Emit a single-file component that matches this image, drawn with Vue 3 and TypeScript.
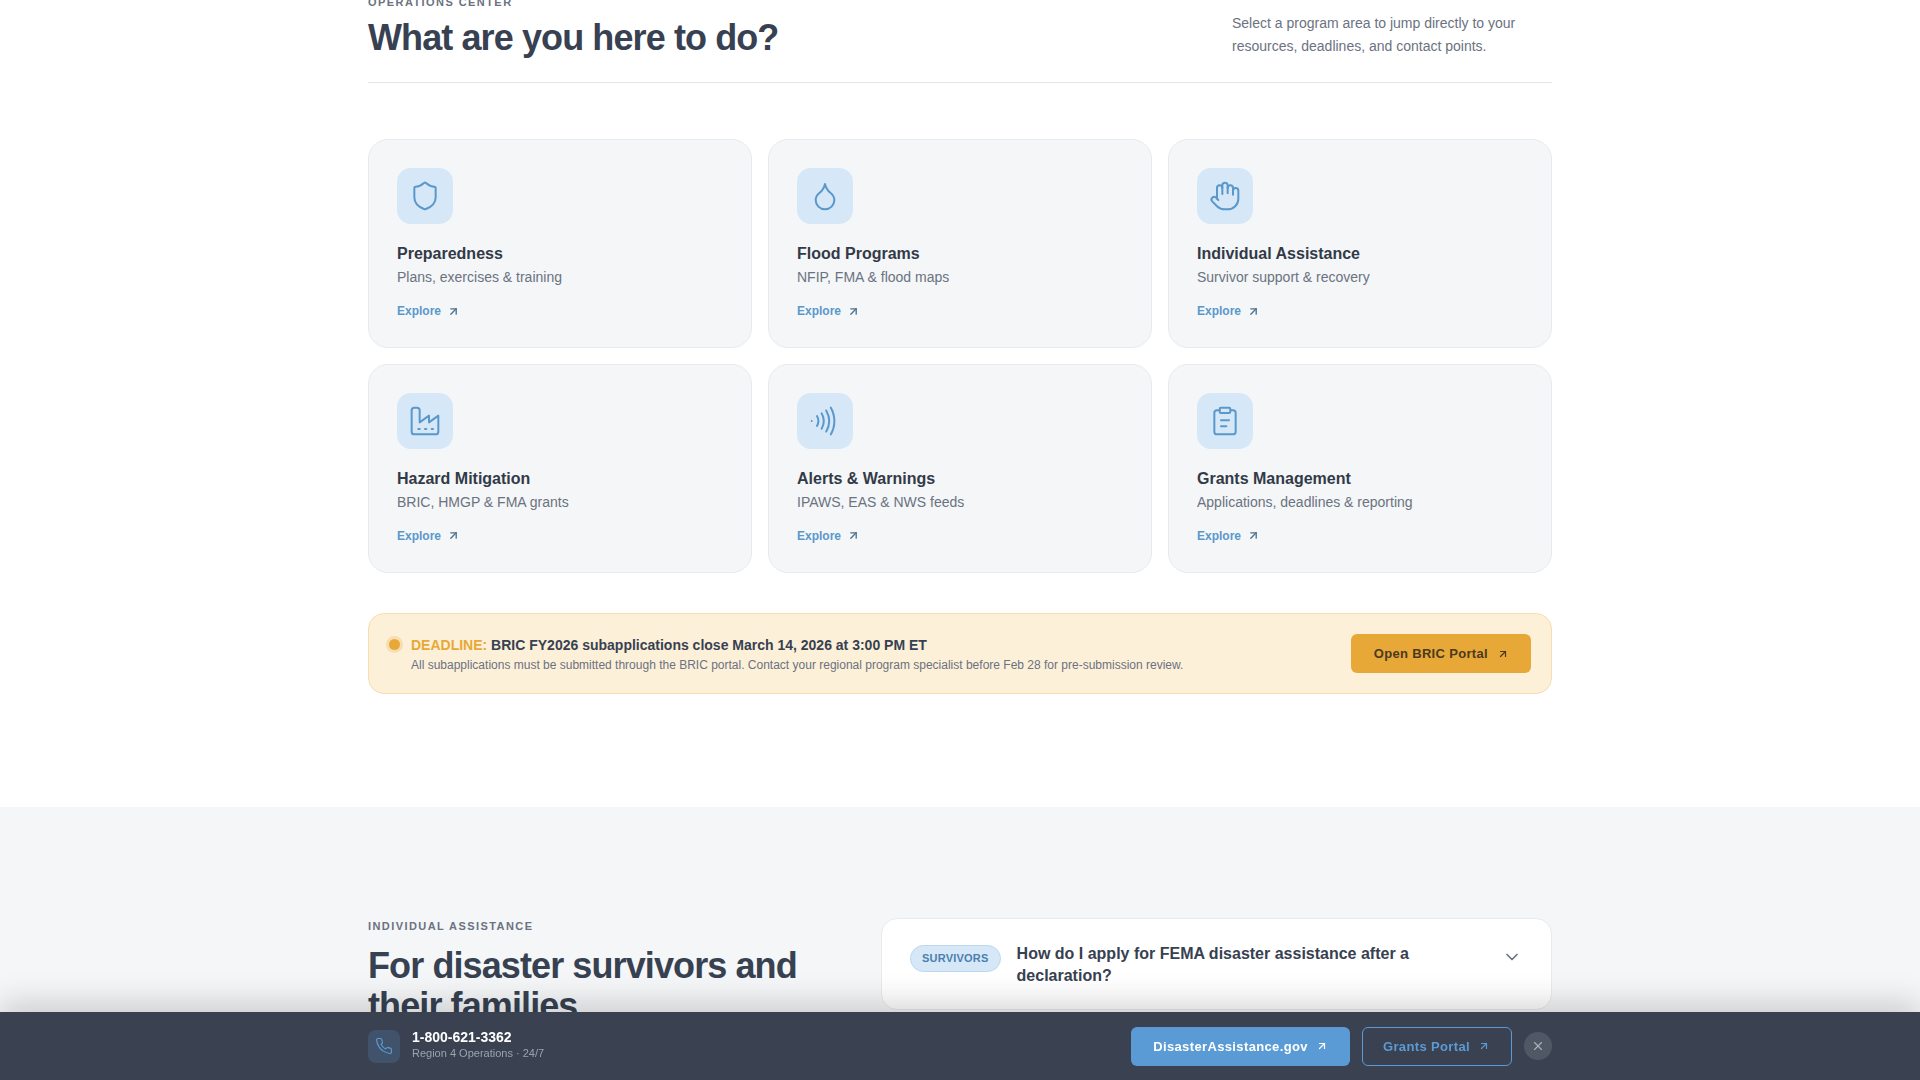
<script setup lang="ts">
type Program = {
  title: string
  text: string
  paths: string[]
}

const arrow = ['M7 7h10v10', 'M7 17 17 7']

const programs: Program[] = [
  {
    title: 'Preparedness',
    text: 'Plans, exercises & training',
    paths: ['M20 13c0 5-3.5 7.5-7.66 8.95a1 1 0 0 1-.67-.01C7.5 20.5 4 18 4 13V6a1 1 0 0 1 1-1c2 0 4.5-1.2 6.24-2.72a1.17 1.17 0 0 1 1.52 0C14.51 3.81 17 5 19 5a1 1 0 0 1 1 1z'],
  },
  {
    title: 'Flood Programs',
    text: 'NFIP, FMA & flood maps',
    paths: ['M12 22a7 7 0 0 0 7-7c0-2-1-3.9-3-5.5s-3.5-4-4-6.5c-.5 2.5-2 4.9-4 6.5C6 11.1 5 13 5 15a7 7 0 0 0 7 7z'],
  },
  {
    title: 'Individual Assistance',
    text: 'Survivor support & recovery',
    paths: [
      'M18 11V6a2 2 0 0 0-2-2a2 2 0 0 0-2 2',
      'M14 10V4a2 2 0 0 0-2-2a2 2 0 0 0-2 2v2',
      'M10 10.5V6a2 2 0 0 0-2-2a2 2 0 0 0-2 2v8',
      'M18 8a2 2 0 1 1 4 0v6a8 8 0 0 1-8 8h-2c-2.8 0-4.5-.86-5.99-2.34l-3.6-3.6a2 2 0 0 1 2.83-2.82L7 15',
    ],
  },
  {
    title: 'Hazard Mitigation',
    text: 'BRIC, HMGP & FMA grants',
    paths: [
      'M2 20a2 2 0 0 0 2 2h16a2 2 0 0 0 2-2V8l-7 5V8l-7 5V4a2 2 0 0 0-2-2H4a2 2 0 0 0-2 2Z',
      'M17 18h1',
      'M12 18h1',
      'M7 18h1',
    ],
  },
  {
    title: 'Alerts & Warnings',
    text: 'IPAWS, EAS & NWS feeds',
    paths: [
      'M2 12h.01',
      'M6 8.32a7.43 7.43 0 0 1 0 7.36',
      'M9.46 6.21a11.76 11.76 0 0 1 0 11.58',
      'M12.91 4.1a15.91 15.91 0 0 1 .01 15.8',
      'M16.37 2a20.16 20.16 0 0 1 0 20',
    ],
  },
  {
    title: 'Grants Management',
    text: 'Applications, deadlines & reporting',
    paths: [
      'M9 2h6a1 1 0 0 1 1 1v2a1 1 0 0 1-1 1H9a1 1 0 0 1-1-1V3a1 1 0 0 1 1-1z',
      'M16 4h2a2 2 0 0 1 2 2v14a2 2 0 0 1-2 2H6a2 2 0 0 1-2-2V6a2 2 0 0 1 2-2h2',
      'M9 11.5h6',
      'M9 16h4',
    ],
  },
]
</script>

<template>
  <div class="page">
    <section class="programs">
      <div class="wrap">
        <header class="head">
          <div>
            <p class="eyebrow">Operations Center</p>
            <h1 class="heading">What are you here to do?</h1>
          </div>
          <p class="intro">Select a program area to jump directly to your resources, deadlines, and contact points.</p>
        </header>

        <div class="grid">
          <article class="card" v-for="item in programs" :key="item.title">
            <div class="card__icon">
              <svg width="32" height="32" viewBox="0 0 24 24" fill="none" stroke="currentColor" stroke-width="1.5" stroke-linecap="round" stroke-linejoin="round">
                <path v-for="d in item.paths" :key="d" :d="d" />
              </svg>
            </div>
            <h3 class="card__title">{{ item.title }}</h3>
            <p class="card__text">{{ item.text }}</p>
            <a class="card__link">
              Explore
              <svg width="13" height="13" viewBox="0 0 24 24" fill="none" stroke="#4a6f8f" stroke-width="2.4" stroke-linecap="round" stroke-linejoin="round">
                <path v-for="d in arrow" :key="d" :d="d" />
              </svg>
            </a>
          </article>
        </div>

        <div class="deadline">
          <span class="deadline__dot"></span>
          <div class="deadline__body">
            <p class="deadline__title"><span class="deadline__tag">DEADLINE:</span> BRIC FY2026 subapplications close March 14, 2026 at 3:00 PM ET</p>
            <p class="deadline__text">All subapplications must be submitted through the BRIC portal. Contact your regional program specialist before Feb 28 for pre-submission review.</p>
          </div>
          <a class="deadline__btn">
            Open BRIC Portal
            <svg width="12" height="12" viewBox="0 0 24 24" fill="none" stroke="currentColor" stroke-width="2.4" stroke-linecap="round" stroke-linejoin="round">
              <path v-for="d in arrow" :key="d" :d="d" />
            </svg>
          </a>
        </div>
      </div>
    </section>

    <section class="survivors">
      <div class="wrap survivors__grid">
        <div>
          <p class="eyebrow eyebrow--low">Individual Assistance</p>
          <h2 class="heading">For disaster survivors and their families</h2>
        </div>
        <div class="faq">
          <span class="faq__badge">SURVIVORS</span>
          <p class="faq__question">How do I apply for FEMA disaster assistance after a declaration?</p>
          <svg class="faq__chevron" width="20" height="20" viewBox="0 0 24 24" fill="none" stroke="currentColor" stroke-width="2" stroke-linecap="round" stroke-linejoin="round">
            <path d="m6 9 6 6 6-6" />
          </svg>
        </div>
      </div>
    </section>

    <div class="bar">
      <div class="wrap bar__inner">
        <div class="bar__phone">
          <span class="bar__icon">
            <svg width="18" height="18" viewBox="0 0 24 24" fill="none" stroke="currentColor" stroke-width="1.5" stroke-linecap="round" stroke-linejoin="round">
              <path d="M22 16.92v3a2 2 0 0 1-2.18 2 19.79 19.79 0 0 1-8.63-3.07 19.5 19.5 0 0 1-6-6 19.79 19.79 0 0 1-3.07-8.67A2 2 0 0 1 4.11 2h3a2 2 0 0 1 2 1.72 12.84 12.84 0 0 0 .7 2.81 2 2 0 0 1-.45 2.11L8.09 9.91a16 16 0 0 0 6 6l1.27-1.27a2 2 0 0 1 2.11-.45 12.84 12.84 0 0 0 2.81.7A2 2 0 0 1 22 16.92z" />
            </svg>
          </span>
          <div class="bar__contact">
            <p class="bar__number">1-800-621-3362</p>
            <p class="bar__region">Region 4 Operations · 24/7</p>
          </div>
        </div>
        <div class="bar__actions">
          <a class="bar__btn bar__btn--solid">
            DisasterAssistance.gov
            <svg width="12" height="12" viewBox="0 0 24 24" fill="none" stroke="currentColor" stroke-width="2.4" stroke-linecap="round" stroke-linejoin="round">
              <path v-for="d in arrow" :key="d" :d="d" />
            </svg>
          </a>
          <a class="bar__btn bar__btn--ghost">
            Grants Portal
            <svg width="12" height="12" viewBox="0 0 24 24" fill="none" stroke="currentColor" stroke-width="2.4" stroke-linecap="round" stroke-linejoin="round">
              <path v-for="d in arrow" :key="d" :d="d" />
            </svg>
          </a>
          <button class="bar__close" type="button" aria-label="Close">
            <svg width="14" height="14" viewBox="0 0 24 24" fill="none" stroke="currentColor" stroke-width="2" stroke-linecap="round">
              <path d="M18 6 6 18" />
              <path d="m6 6 12 12" />
            </svg>
          </button>
        </div>
      </div>
    </div>
  </div>
</template>

<style>
html,
body {
  margin: 0;
  overflow: hidden;
  background: #fff;
}
</style>

<style scoped>
.page {
  height: 1080px;
  overflow: hidden;
  font-family: "Liberation Sans", Arial, sans-serif;
  color: #374151;
}
.wrap {
  width: 1184px;
  margin: 0 auto;
}
p,
h1,
h2,
h3 {
  margin: 0;
}

.programs {
  margin-top: -5px;
  padding-bottom: 112.5px;
}
.head {
  display: flex;
  justify-content: space-between;
  align-items: flex-end;
  padding-bottom: 24px;
  border-bottom: 1px solid #e5e7eb;
}
.eyebrow {
  font-size: 11px;
  line-height: 14px;
  font-weight: 700;
  letter-spacing: 0.13em;
  text-transform: uppercase;
  color: #6b7280;
  margin-bottom: 9px;
}
.eyebrow--low {
  margin-top: 1px;
  margin-bottom: 13px;
}
.heading {
  font-size: 36px;
  line-height: 40px;
  font-weight: 700;
  letter-spacing: -0.025em;
  color: #374151;
}
.intro {
  width: 320px;
  font-size: 14px;
  line-height: 23px;
  color: #6b7280;
}

.grid {
  display: grid;
  grid-template-columns: repeat(3, 1fr);
  gap: 16px;
  margin-top: 56.4px;
}
.card {
  padding: 28px;
  background: #f4f6f8;
  border: 1px solid #e8eaed;
  border-radius: 20px;
}
.card__icon {
  width: 56px;
  height: 56px;
  display: flex;
  align-items: center;
  justify-content: center;
  background: #d6e8f7;
  border-radius: 14px;
  color: #5a98cc;
}
.card__title {
  margin-top: 19.7px;
  font-size: 16px;
  line-height: 20px;
  font-weight: 700;
  color: #333a47;
}
.card__text {
  margin-top: 3.2px;
  font-size: 14px;
  line-height: 20px;
  color: #6b7280;
}
.card__link {
  display: flex;
  align-items: center;
  gap: 6px;
  margin-top: 15.8px;
  font-size: 12px;
  line-height: 16px;
  font-weight: 700;
  color: #5a98cc;
}

.deadline {
  display: flex;
  align-items: center;
  margin-top: 40.7px;
  padding: 21px 20px 19px;
  background: #fdf0d9;
  border: 1px solid #f5deb0;
  border-radius: 16px;
}
.deadline__dot {
  flex: none;
  align-self: flex-start;
  width: 11px;
  height: 11px;
  margin: 4px 11px 0 0;
  background: #e8a838;
  border-radius: 50%;
  box-shadow: 0 0 0 3px rgba(232, 168, 56, 0.25);
}
.deadline__body {
  flex: 1;
}
.deadline__title {
  font-size: 14px;
  line-height: 20px;
  font-weight: 700;
  color: #374151;
}
.deadline__tag {
  color: #e8a838;
}
.deadline__text {
  margin-top: 1px;
  font-size: 12px;
  line-height: 18px;
  color: #6b7280;
}
.deadline__btn {
  display: flex;
  align-items: center;
  gap: 9px;
  height: 39px;
  margin-top: -2px;
  padding: 0 22px 0 23px;
  background: #e8a838;
  border-radius: 6px;
  font-size: 13px;
  font-weight: 700;
  letter-spacing: 0.025em;
  color: #4a3a1f;
}

.survivors {
  padding: 111px 0 112px;
  background: #f4f6f8;
}
.survivors__grid {
  display: grid;
  grid-template-columns: 449px 1fr;
  gap: 64px;
}
.faq {
  display: flex;
  align-items: flex-start;
  align-self: start;
  gap: 16px;
  padding: 24px 27px 22px 28px;
  background: #fff;
  border: 1px solid #e8eaed;
  border-radius: 16px;
}
.faq__badge {
  flex: none;
  margin-top: 2px;
  padding: 0 11px;
  height: 27px;
  line-height: 25px;
  box-sizing: border-box;
  background: #d6e8f7;
  border: 1px solid #bcd7ee;
  border-radius: 14px;
  font-size: 11px;
  font-weight: 700;
  letter-spacing: 0.02em;
  color: #4a7fb0;
}
.faq__question {
  flex: 1;
  font-size: 16px;
  line-height: 22px;
  font-weight: 700;
  color: #374151;
}
.faq__chevron {
  flex: none;
  margin: 4px 2px 0 0;
  color: #6b7280;
}

.bar {
  position: fixed;
  left: 0;
  right: 0;
  bottom: 0;
  height: 68px;
  background: #3a4150;
  box-shadow: 0 -8px 32px rgba(0, 0, 0, 0.18);
}
.bar__inner {
  display: flex;
  align-items: center;
  justify-content: space-between;
  height: 100%;
}
.bar__phone {
  display: flex;
  align-items: center;
  gap: 12px;
}
.bar__icon {
  width: 32px;
  height: 33px;
  display: flex;
  align-items: center;
  justify-content: center;
  background: rgba(91, 155, 213, 0.2);
  border-radius: 8px;
  color: #5b9bd5;
}
.bar__contact {
  margin-bottom: 2px;
}
.bar__number {
  margin-top: -1px;
  font-size: 14px;
  line-height: 18px;
  font-weight: 700;
  color: #fff;
}
.bar__region {
  font-size: 11px;
  line-height: 15px;
  color: #9ca3af;
}
.bar__actions {
  display: flex;
  align-items: center;
  gap: 12px;
}
.bar__btn {
  display: flex;
  align-items: center;
  gap: 8px;
  height: 39px;
  box-sizing: border-box;
  padding: 0 22px;
  border-radius: 6px;
  font-size: 13px;
  font-weight: 700;
  letter-spacing: 0.028em;
}
.bar__btn--solid {
  background: #5b9bd5;
  color: #fff;
}
.bar__btn--ghost {
  padding: 0 21px 0 20px;
  border: 1px solid #5b9bd5;
  color: #5b9bd5;
}
.bar__close {
  width: 28px;
  height: 28px;
  display: flex;
  align-items: center;
  justify-content: center;
  padding: 0;
  border: 0;
  border-radius: 50%;
  background: rgba(255, 255, 255, 0.12);
  color: #a9afba;
}
</style>
